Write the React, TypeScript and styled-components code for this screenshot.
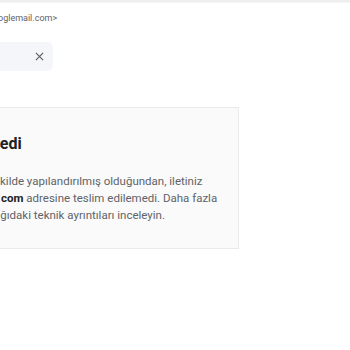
import styled, { createGlobalStyle } from "styled-components"

const Global = createGlobalStyle`
  html, body {
    margin: 0;
    padding: 0;
    background: #ffffff;
    overflow: hidden;
  }
  body {
    font-family: Roboto, "Liberation Sans", Arial, sans-serif;
  }
`

const App = () => {
  return (
    <>
      <Global />
      <Page>
        <TopBar />
        <Sender>
          <Clip $shift={-2}>oglemail.com&gt;</Clip>
        </Sender>
        <ChipRow>
          <Chip>
            <CloseIcon viewBox="0 0 10 10">
              <path d="M1 1 L9 9 M9 1 L1 9" />
            </CloseIcon>
          </Chip>
        </ChipRow>
        <Card>
          <Title>
            <Clip $shift={-15}>medi</Clip>
          </Title>
          <Text>
            <Line>
              <Clip $shift={-1}>kilde yapılandırılmış olduğundan, iletiniz</Clip>
            </Line>
            <Line>
              <Strong>com</Strong> adresine teslim edilemedi. Daha fazla
            </Line>
            <Line>
              <Clip $shift={-7}>ağıdaki teknik ayrıntıları inceleyin.</Clip>
            </Line>
          </Text>
        </Card>
      </Page>
    </>
  )
}

export default App

const Page = styled.div`
  width: 350px;
  height: 350px;
  display: flex;
  flex-direction: column;
`

const TopBar = styled.div`
  height: 2px;
  background: #eeeeee;
  border-bottom: 1px solid #f5f5f5;
`

const Sender = styled.div`
  margin-top: 7px;
  height: 16px;
  font-size: 9px;
  line-height: 16px;
  color: #5f6368;
  overflow: hidden;
`

const Clip = styled.span<{ $shift: number }>`
  display: inline-block;
  margin-left: ${(p) => p.$shift}px;
`

const ChipRow = styled.div`
  margin-top: 16px;
  display: flex;
`

const Chip = styled.div`
  width: 53px;
  height: 29px;
  background: #f4f6f9;
  border-radius: 0 6px 6px 0;
  display: flex;
  align-items: center;
  justify-content: flex-end;
  padding-right: 9px;
  box-sizing: border-box;
`

const CloseIcon = styled.svg`
  width: 9px;
  height: 9px;
  stroke: #5f6368;
  stroke-width: 1.4;
  fill: none;
`

const Card = styled.div`
  margin-top: 36px;
  margin-left: -24px;
  width: 263px;
  height: 142px;
  box-sizing: border-box;
  padding: 24px 0 0 24px;
  background: #fafafa;
  border: 1px solid #ebebeb;
  overflow: hidden;
`

const Title = styled.div`
  font-size: 16px;
  font-weight: 700;
  color: #202124;
  line-height: 24px;
  white-space: nowrap;
`

const Text = styled.div`
  margin-top: 17px;
  font-size: 11.5px;
  line-height: 17px;
  color: #5f6368;
`

const Line = styled.div`
  white-space: nowrap;
`

const Strong = styled.b`
  color: #202124;
  font-weight: 700;
`
